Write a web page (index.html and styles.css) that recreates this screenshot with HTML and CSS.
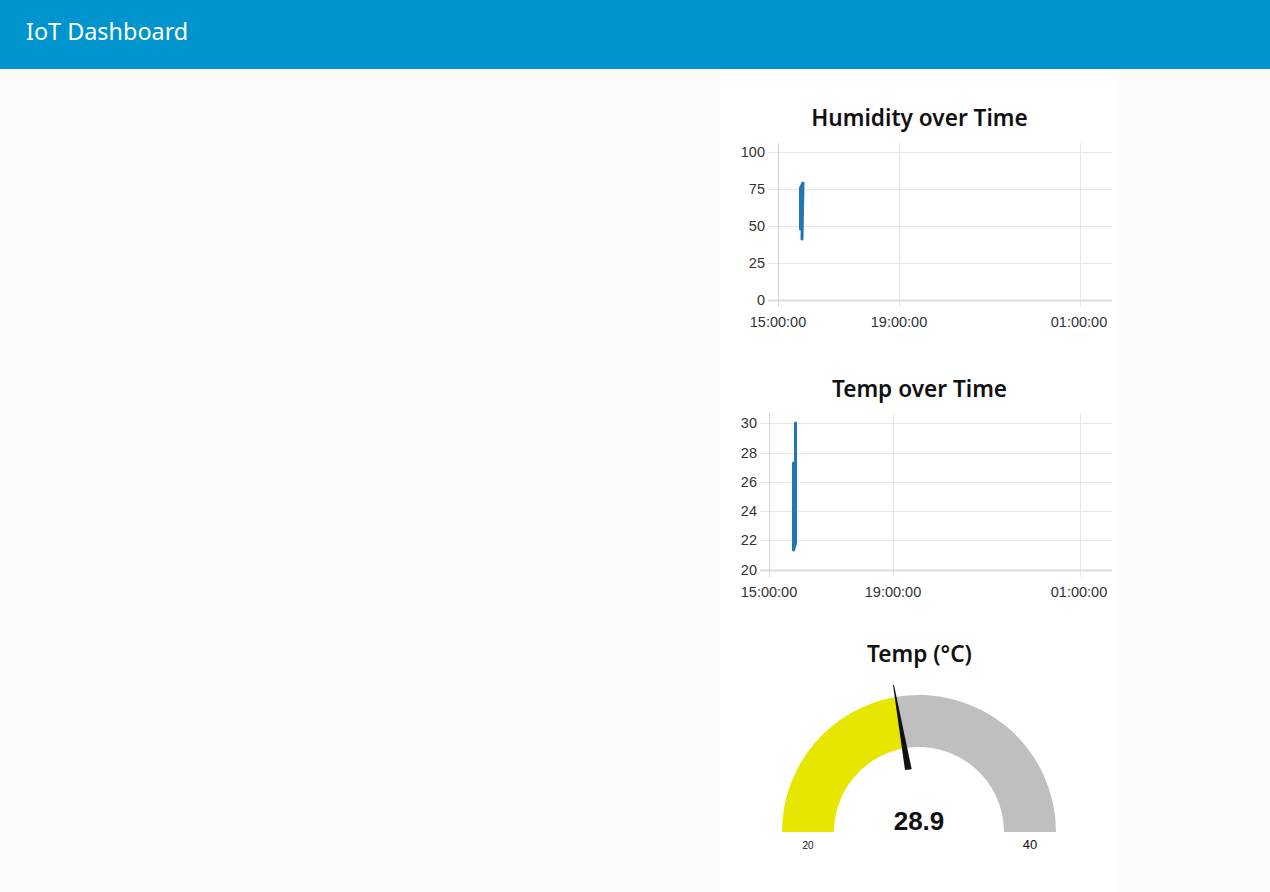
FILE: index.html
```html
<!DOCTYPE html>
<html lang="en">
<head>
<meta charset="utf-8">
<title>IoT Dashboard</title>
<link rel="stylesheet" href="styles.css">
</head>
<body>
<header class="toolbar">
  <h1 class="toolbar-title">IoT Dashboard</h1>
</header>
<main class="content">
  <section class="group">
    <div class="widget widget-humidity">
      <h2 class="widget-title">Humidity over Time</h2>
      <svg class="chart" width="399" height="200" viewBox="0 0 399 200">
        <g class="grid">
          <line x1="48" y1="16.5" x2="392" y2="16.5"/>
          <line x1="48" y1="53.5" x2="392" y2="53.5"/>
          <line x1="48" y1="90.5" x2="392" y2="90.5"/>
          <line x1="48" y1="127.5" x2="392" y2="127.5"/>
          <line x1="179.5" y1="7" x2="179.5" y2="171"/>
          <line x1="360.5" y1="7" x2="360.5" y2="171"/>
        </g>
        <g class="axis">
          <line x1="48" y1="164.5" x2="392" y2="164.5"/>
          <line x1="58.5" y1="7" x2="58.5" y2="171"/>
        </g>
        <g class="ticks-y">
          <text x="45" y="21">100</text>
          <text x="45" y="58">75</text>
          <text x="45" y="95">50</text>
          <text x="45" y="132">25</text>
          <text x="45" y="169">0</text>
        </g>
        <g class="ticks-x">
          <text x="58" y="191">15:00:00</text>
          <text x="179" y="191">19:00:00</text>
          <text x="359" y="191">01:00:00</text>
        </g>
        <polyline class="series" points="80.5,93 80.5,52 83,47 82,103"/>
      </svg>
    </div>
    <div class="widget widget-temp">
      <h2 class="widget-title">Temp over Time</h2>
      <svg class="chart" width="399" height="200" viewBox="0 0 399 200">
        <g class="grid">
          <line x1="40" y1="17.5" x2="392" y2="17.5"/>
          <line x1="40" y1="47.5" x2="392" y2="47.5"/>
          <line x1="40" y1="76.5" x2="392" y2="76.5"/>
          <line x1="40" y1="105.5" x2="392" y2="105.5"/>
          <line x1="40" y1="134.5" x2="392" y2="134.5"/>
          <line x1="173.5" y1="7" x2="173.5" y2="171"/>
          <line x1="360.5" y1="7" x2="360.5" y2="171"/>
        </g>
        <g class="axis">
          <line x1="40" y1="164.5" x2="392" y2="164.5"/>
          <line x1="49.5" y1="7" x2="49.5" y2="171"/>
        </g>
        <g class="ticks-y">
          <text x="37" y="22">30</text>
          <text x="37" y="52">28</text>
          <text x="37" y="81">26</text>
          <text x="37" y="110">24</text>
          <text x="37" y="139">22</text>
          <text x="37" y="169">20</text>
        </g>
        <g class="ticks-x">
          <text x="49" y="191">15:00:00</text>
          <text x="173" y="191">19:00:00</text>
          <text x="359" y="191">01:00:00</text>
        </g>
        <polyline class="series" points="75.5,17 75.5,137 73.5,144 73.5,57"/>
      </svg>
    </div>
    <div class="widget widget-gauge">
      <h2 class="widget-title">Temp (°C)</h2>
      <svg class="gauge" width="399" height="210" viewBox="0 0 399 210">
        <path class="gauge-bg" d="M175.4,27.0 A137,137 0 0 1 336,162 L284,162 A85,85 0 0 0 184.4,78.3 Z"/>
        <path class="gauge-level" d="M62,162 A137,137 0 0 1 175.4,27.0 L184.4,78.3 A85,85 0 0 0 114,162 Z"/>
        <polygon class="gauge-needle" points="173,15 174,15 191.7,99.3 185,100"/>
        <text class="gauge-value" x="199" y="160">28.9</text>
        <text class="gauge-min" x="88" y="179">20</text>
        <text class="gauge-max" x="310" y="179">40</text>
      </svg>
    </div>
  </section>
</main>
</body>
</html>
```

FILE: styles.css
```css
html, body {
  margin: 0;
  padding: 0;
}

body {
  background: #fafafa;
  font-family: "Noto Sans", "Open Sans", sans-serif;
  color: #111;
  min-height: 100vh;
}

.toolbar {
  background: #0094ce;
  height: 69px;
  display: flex;
  align-items: center;
  padding: 0 26px;
  box-sizing: border-box;
}

.toolbar-title {
  margin: 0 0 8px 0;
  color: #fff;
  font-size: 23.4px;
  font-weight: 400;
  letter-spacing: 0;
}

.content {
  display: flex;
  padding-left: 720px;
}

.group {
  width: 399px;
  background: #fff;
  min-height: calc(100vh - 69px);
  padding-top: 34px;
  box-sizing: border-box;
}

.widget {
  display: flex;
  flex-direction: column;
}

.widget-title {
  margin: 0;
  height: 30px;
  line-height: 30px;
  text-align: center;
  font-size: 22.6px;
  font-weight: 600;
  color: #111;
}

.widget-humidity .chart { margin-top: 3px; }
.widget-humidity { margin-bottom: 38px; }
.widget-temp .chart { margin-top: 2px; }
.widget-temp { margin-bottom: 33px; }
.widget-gauge .gauge { margin-top: 1px; }

.chart, .gauge {
  display: block;
}

.grid line {
  stroke: #e6e6e6;
  stroke-width: 1;
}

.axis line {
  stroke: #d4d4d4;
  stroke-width: 1;
}

.axis line:first-child {
  stroke-width: 2;
  stroke: #dcdcdc;
}

.ticks-y text, .ticks-x text {
  font-family: "Liberation Sans", Arial, sans-serif;
  font-size: 14.5px;
  fill: #333;
}

.ticks-y text {
  text-anchor: end;
}

.ticks-x text {
  text-anchor: middle;
}

.series {
  fill: none;
  stroke: #1f77b4;
  stroke-width: 3;
  stroke-linejoin: round;
  stroke-linecap: round;
}

.gauge-bg {
  fill: #bfbfbf;
}

.gauge-level {
  fill: #e6e600;
}

.gauge-needle {
  fill: #111;
}

.gauge-value {
  font-family: "Liberation Sans", Arial, sans-serif;
  font-size: 26px;
  font-weight: 700;
  text-anchor: middle;
  fill: #111;
}

.gauge-min {
  font-family: "Liberation Sans", Arial, sans-serif;
  font-size: 10px;
  text-anchor: middle;
  fill: #111;
}

.gauge-max {
  font-family: "Liberation Sans", Arial, sans-serif;
  font-size: 13px;
  text-anchor: middle;
  fill: #111;
}
```
